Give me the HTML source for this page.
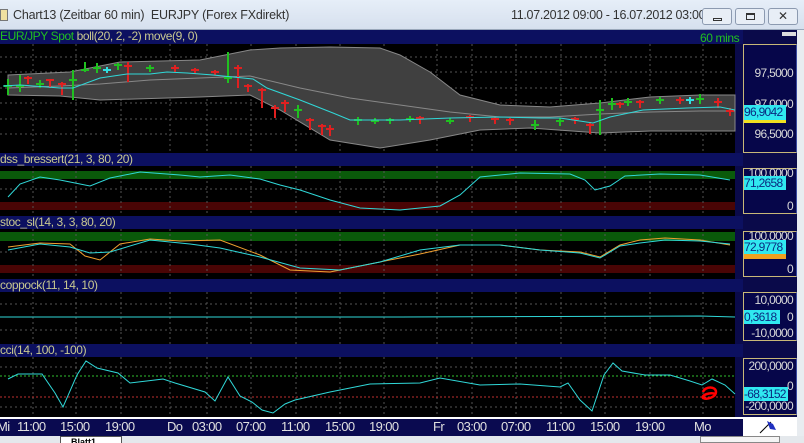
<!DOCTYPE html>
<html><head><meta charset="utf-8"><style>
*{margin:0;padding:0;box-sizing:border-box}
body{width:804px;height:443px;overflow:hidden;background:#0a0a4a;font-family:"Liberation Sans",sans-serif;position:relative}
.a{position:absolute}
.hdr{position:absolute;left:0;width:743px;height:13px;background:#0c1060;color:#c8c890;font-size:12px;line-height:13px;white-space:nowrap;letter-spacing:-0.4px}
.ax{position:absolute;left:743px;width:54px;background:#06064a;border:1px solid #c8b878;border-right:1px solid #3a4aa0}
.lbl{position:absolute;right:3px;color:#d8d8d8;font-size:12px;letter-spacing:-0.7px}
.t{position:absolute;top:419px;color:#e0e0e0;font-size:13px;letter-spacing:-0.6px}
.v{position:absolute;left:0;height:14px;background:#30e8f0;color:#0a2a80;font-size:12px;line-height:14px;letter-spacing:-0.7px;overflow:hidden;white-space:nowrap}
</style></head><body>
<div class="a" style="left:0;top:0;width:804px;height:30px;background:linear-gradient(#e6eef8,#d6e0ee);border-bottom:1px solid #9aa8bb"></div>
<div class="a" style="left:0;top:9px;width:8px;height:12px;background:#f0e0a0;border:1px solid #777"></div>
<div class="a" style="left:13px;top:8px;font-size:12.5px;color:#333;letter-spacing:-0.2px">Chart13 (Zeitbar 60 min)&nbsp; EURJPY (Forex FXdirekt)</div>
<div class="a" style="left:511px;top:8px;font-size:12.5px;color:#333;letter-spacing:-0.3px">11.07.2012 09:00 - 16.07.2012 03:00</div>
<div class="a" style="left:702px;top:8px;width:30px;height:17px;border:1px solid #8c9ab0;border-radius:3px;background:#e8eef6"><div class="a" style="left:10px;top:9px;width:9px;height:3px;border:1px solid #333"></div></div>
<div class="a" style="left:735px;top:8px;width:30px;height:17px;border:1px solid #8c9ab0;border-radius:3px;background:#e8eef6"><div class="a" style="left:10px;top:4px;width:9px;height:7px;border:1px solid #333;border-top-width:2px"></div></div>
<div class="a" style="left:768px;top:8px;width:30px;height:17px;border:1px solid #8c9ab0;border-radius:3px;background:#e8eef6;font-size:12px;text-align:center;line-height:15px;color:#333">✕</div>
<div class="a" style="left:797px;top:30px;width:7px;height:413px;background:#e8ecf0"></div>

<div class="hdr" style="top:30px;height:14px"><span style="color:#20c020">EUR/JPY Spot</span> boll(20, 2, -2) move(9, 0)</div>
<div class="a" style="left:700px;top:31px;color:#20c020;font-size:12px;letter-spacing:-0.4px">60 mins</div>
<div class="a" style="left:782px;top:32px;width:14px;height:4px;background:#ddd"></div>
<div class="hdr" style="top:153px">dss_bressert(21, 3, 80, 20)</div>
<div class="hdr" style="top:216px">stoc_sl(14, 3, 3, 80, 20)</div>
<div class="hdr" style="top:279px">coppock(11, 14, 10)</div>
<div class="hdr" style="top:344px">cci(14, 100, -100)</div>

<svg class="a" style="left:0;top:0" width="743" height="443">
<g fill="#000"><rect x="0" y="44" width="735" height="109"/><rect x="0" y="166" width="735" height="50"/><rect x="0" y="229" width="735" height="50"/><rect x="0" y="292" width="735" height="52"/><rect x="0" y="357" width="735" height="61"/></g>
<rect x="0" y="171" width="735" height="8" fill="#0a5a0a"/><rect x="0" y="202" width="735" height="8" fill="#4a0505"/>
<rect x="0" y="232" width="735" height="9" fill="#0a5a0a"/><rect x="0" y="265" width="735" height="8" fill="#4a0505"/>
<g stroke="#555" stroke-dasharray="2,3" stroke-width="1">
<path d="M33 44V153M76 44V153M121 44V153M170 44V153M207 44V153M251 44V153M296 44V153M340 44V153M384 44V153M437 44V153M472 44V153M516 44V153M561 44V153M605 44V153M650 44V153M703 44V153"/>
<path d="M33 166V216M76 166V216M121 166V216M170 166V216M207 166V216M251 166V216M296 166V216M340 166V216M384 166V216M437 166V216M472 166V216M516 166V216M561 166V216M605 166V216M650 166V216M703 166V216"/>
<path d="M33 229V279M76 229V279M121 229V279M170 229V279M207 229V279M251 229V279M296 229V279M340 229V279M384 229V279M437 229V279M472 229V279M516 229V279M561 229V279M605 229V279M650 229V279M703 229V279"/>
<path d="M33 292V344M76 292V344M121 292V344M170 292V344M207 292V344M251 292V344M296 292V344M340 292V344M384 292V344M437 292V344M472 292V344M516 292V344M561 292V344M605 292V344M650 292V344M703 292V344"/>
<path d="M33 357V418M76 357V418M121 357V418M170 357V418M207 357V418M251 357V418M296 357V418M340 357V418M384 357V418M437 357V418M472 357V418M516 357V418M561 357V418M605 357V418M650 357V418M703 357V418"/>
<path d="M0 57H735M0 72H735M0 88H735M0 103H735M0 119H735M0 134H735M0 189H735M0 252H735M0 304H735M0 330H735M0 367H735M0 407H735"/>
</g>
<path d="M8 75L70 72L120 62L200 60L250 50L280 48L330 47L380 48L400 55L430 72L460 95L500 105L550 107L600 103L650 97L700 95L735 95L735 131L650 131L600 133L530 128L480 130L430 140L380 148L330 140L280 110L250 95L200 97L100 100L60 96L8 95Z" fill="#404040" stroke="#888" stroke-width="1"/>
<polyline fill="none" stroke="#888" points="8,88 60,86 100,84 150,80 200,78 250,76 300,88 350,98 400,105 450,112 500,117 550,117 600,114 650,112 700,111 735,111"/>
<g stroke-width="2" fill="none">
<path stroke="#20c020" d="M8 79V95M4 86H12M20 75V92M16 86H24M40 80V88M36 84H44M73 70V100M69 80H77M85 62V72M81 70H89M97 63V73M93 68H101M118 63V70M114 65H122M150 65V72M146 68H154M228 52V83M224 78H232M298 105V118M294 110H302M358 117V125M354 120H362M375 118V124M371 121H379M390 118V124M386 120H394M410 116V122M406 119H414M450 118V124M446 121H454M535 120V130M531 125H539M560 118V126M556 121H564M600 100V135M596 110H604M612 98V110M608 104H616M628 98V106M624 102H632M660 97V104M656 100H664M700 94V104M696 99H704"/>
<path stroke="#e02020" d="M28 76V84M24 78H32M50 79V88M46 80H54M62 82V95M58 84H66M128 62V82M124 66H132M175 65V72M171 68H179M195 68V74M191 70H199M215 70V75M211 72H219M238 65V88M234 68H242M248 84V92M244 86H252M262 88V108M258 90H266M275 105V118M271 108H279M285 100V112M281 103H289M310 118V130M306 120H314M322 124V135M318 126H326M330 125V136M326 129H334M420 116V124M416 118H424M470 115V122M466 117H474M495 117V124M491 119H499M510 118V125M506 120H514M575 117V124M571 119H579M590 122V134M586 125H594M620 102V108M616 104H624M640 100V108M636 102H644M680 97V104M676 100H684M718 98V108M714 102H722M730 108V116M726 111H734"/>
<path stroke="#30e0e0" d="M107 67V73M103 70H111M690 97V104M686 100H694"/>
</g>
<polyline fill="none" stroke="#30d8d8" stroke-width="1" points="3,86 20,85 60,88 73,88 100,78 127,74 150,74 167,72 187,73 213,75 233,77 253,79 267,88 300,100 333,113 350,120 400,120 450,118 500,117 540,118 560,118 593,123 610,117 643,110 687,108 720,107 735,110"/>
<polyline fill="none" stroke="#30d8d8" points="8,197 20,184 40,177 60,180 90,186 110,178 140,172 180,175 200,177 230,175 260,179 280,185 300,190 330,200 360,208 400,210 440,206 460,195 480,177 520,173 570,174 585,180 595,190 610,186 625,176 660,174 700,175 730,180"/>
<polyline fill="none" stroke="#f0a030" points="8,247 40,243 70,244 85,256 100,260 120,244 150,239 180,241 220,240 260,255 290,270 330,272 380,262 420,254 460,245 500,245 540,250 580,252 600,257 620,245 640,240 665,238 700,240 730,245"/>
<polyline fill="none" stroke="#30d8d8" points="8,250 40,244 70,247 90,253 110,252 150,240 190,244 220,248 260,257 300,268 340,270 380,262 420,250 460,245 500,245 540,250 580,253 600,258 620,246 640,243 665,240 700,241 730,244"/>
<polyline fill="none" stroke="#30d8d8" points="0,317 400,317 700,316 735,317"/>
<path d="M0 376H735" stroke="#30c030" stroke-dasharray="2,2"/>
<path d="M0 397H735" stroke="#c03030" stroke-dasharray="2,2"/>
<polyline fill="none" stroke="#30d8d8" points="8,379 18,374 42,374 55,393 63,407 77,375 86,361 97,368 118,373 130,383 155,380 163,379 175,383 205,392 215,401 228,377 240,396 252,402 262,410 273,413 285,404 295,400 330,392 370,384 420,383 440,378 480,385 520,384 560,387 568,383 580,400 592,411 604,375 613,363 622,371 645,375 670,375 690,381 702,385 712,379 725,385 735,394"/>
<path d="M703 392C705 386 716 386 716 392C716 397 707 400 703 398C701 395 710 392 716 394" fill="none" stroke="#f00" stroke-width="2.5"/>
<path d="M0 418H743" stroke="#fff" stroke-width="2"/>
<rect x="0" y="419" width="743" height="17" fill="#0a0a50"/>
</svg>

<div class="ax" style="top:44px;height:109px"><div class="lbl" style="top:21px">97,5000</div><div class="lbl" style="top:52px">97,0000</div><div class="lbl" style="top:82px">96,5000</div>
<div class="v" style="top:60px;width:42px;height:15px">96,9042</div><div class="a" style="left:0;top:75px;width:42px;height:3px;background:#f0e020"></div></div>
<div class="ax" style="top:168px;height:46px"><div class="lbl" style="top:-3px">100,0000</div><div class="lbl" style="top:30px">0</div>
<div class="v" style="top:7px;width:42px">71,2658</div></div>
<div class="ax" style="top:231px;height:46px"><div class="lbl" style="top:-3px">100,0000</div><div class="lbl" style="top:30px">0</div>
<div class="v" style="top:8px;width:42px">72,9778</div><div class="a" style="left:0;top:22px;width:42px;height:5px;background:#f0a020"></div></div>
<div class="ax" style="top:292px;height:49px"><div class="lbl" style="top:0px">10,0000</div><div class="lbl" style="top:17px">0</div><div class="lbl" style="top:33px">-10,0000</div>
<div class="v" style="top:17px;width:36px">0,3618</div></div>
<div class="ax" style="top:358px;height:57px"><div class="lbl" style="top:0px">200,0000</div><div class="lbl" style="top:20px">0</div><div class="lbl" style="top:40px">-200,0000</div>
<div class="v" style="top:28px;width:44px">-68,3152</div></div>
<div class="a" style="left:743px;top:417px;width:54px;height:19px;background:#fff"><svg width="54" height="19"><path d="M17 16L28 5" stroke="#000"/><path d="M24 4L30 7L33 13L27 12Z" fill="#2030c0"/></svg></div>

<div class="t" style="left:-3px">Mi</div><div class="t" style="left:17px">11:00</div><div class="t" style="left:60px">15:00</div><div class="t" style="left:105px">19:00</div>
<div class="t" style="left:167px">Do</div><div class="t" style="left:192px">03:00</div><div class="t" style="left:236px">07:00</div><div class="t" style="left:281px">11:00</div><div class="t" style="left:325px">15:00</div><div class="t" style="left:369px">19:00</div>
<div class="t" style="left:433px">Fr</div><div class="t" style="left:457px">03:00</div><div class="t" style="left:501px">07:00</div><div class="t" style="left:546px">11:00</div><div class="t" style="left:590px">15:00</div><div class="t" style="left:635px">19:00</div><div class="t" style="left:694px">Mo</div>

<div class="a" style="left:0;top:436px;width:804px;height:7px;background:#e4e8ec"></div>
<div class="a" style="left:60px;top:436px;width:62px;height:7px;background:#fff;border:1px solid #555;border-bottom:none;font-size:9px;font-weight:bold;line-height:10px;padding-left:10px;overflow:hidden">Blatt1</div>
<div class="a" style="left:700px;top:436px;width:80px;height:7px;border:1px solid #888;background:#f4f4f4"></div>
</body></html>
